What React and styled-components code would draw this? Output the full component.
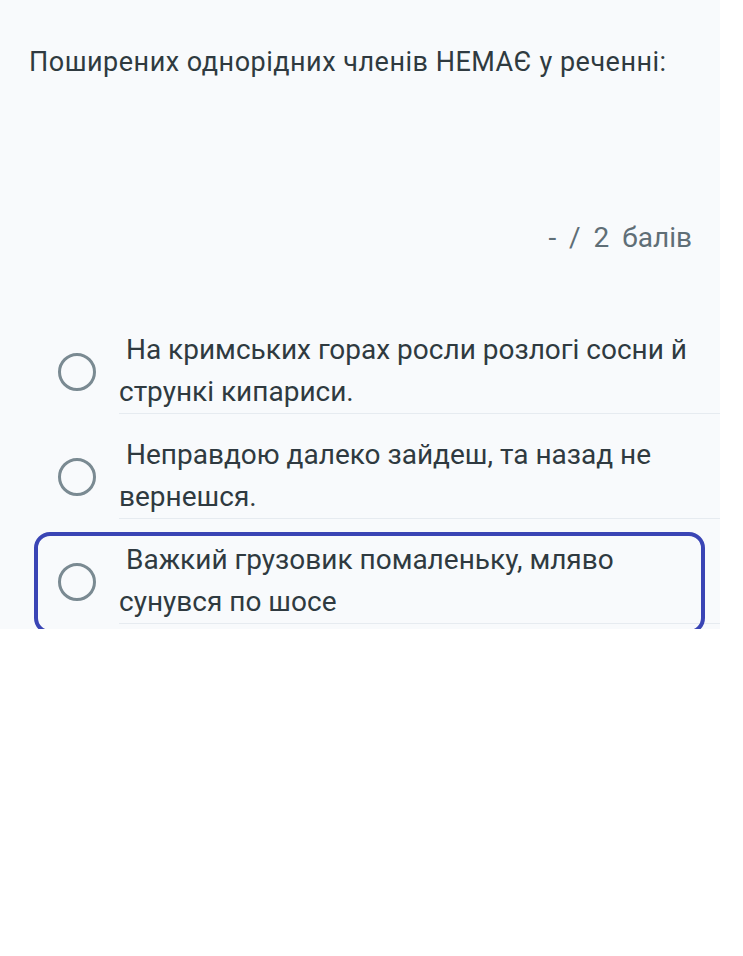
import React from 'react'
import styled, {createGlobalStyle} from "styled-components"

const Global = createGlobalStyle`
body{
  margin:0;
  background:#ffffff;
  font-family: Roboto, "Noto Sans", sans-serif;
}
`

const Panel = styled.div`
width:720px;
background-color:#f8fafc;
padding-bottom:5px;
`

const Title = styled.div`
padding:45px 29px 0 29px;
font-size:27px;
letter-spacing:0.5px;
line-height:35px;
color:#2f3a40;
`

const Score = styled.div`
margin-top:140px;
padding-right:28px;
text-align:right;
font-size:28px;
line-height:36px;
color:#5f6e76;
word-spacing:6px;
`

const Options = styled.div`
margin-top:53px;
display:flex;
flex-direction:column;
`

const Row = styled.div`
position:relative;
display:flex;
align-items:center;
padding:20px 0 0 58px;
`

const Radio = styled.div`
flex:none;
width:32px;
height:32px;
border:3px solid #7a8a92;
border-radius:50%;
margin-right:23px;
`

const Label = styled.div`
flex:1;
font-size:28px;
line-height:42px;
color:#2f3a40;
white-space:pre-wrap;
border-bottom:1px solid #e6ebf0;
`

const Highlight = styled.div`
position:absolute;
top:13px;
left:34px;
width:663px;
height:94px;
border:4px solid #3a45b5;
border-radius:16px;
pointer-events:none;
`

const options = [
  " На кримських горах росли розлогі сосни й стрункі кипариси.",
  " Неправдою далеко зайдеш, та назад не вернешся.",
  " Важкий грузовик помаленьку, мляво сунувся по шосе",
]

const App = () => {
  return (
    <>
      <Global/>
      <Panel>
        <Title>Поширених однорідних членів НЕМАЄ у реченні:</Title>
        <Score>- / 2 балів</Score>
        <Options>
          {options.map((text, i) => (
            <Row key={i}>
              <Radio/>
              <Label>{text}</Label>
              {i === 2 && <Highlight/>}
            </Row>
          ))}
        </Options>
      </Panel>
    </>
  )
}

export default App
